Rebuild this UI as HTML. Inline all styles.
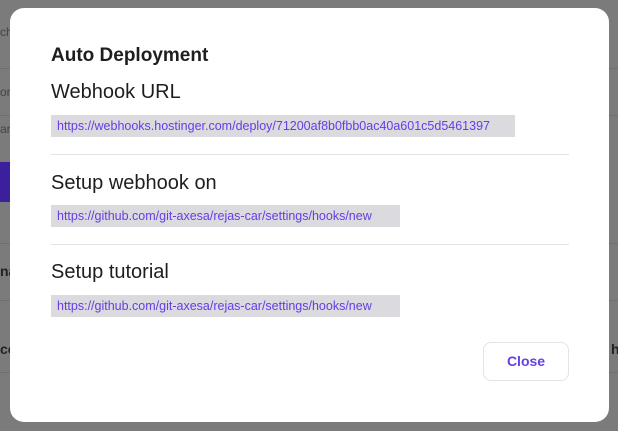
<!DOCTYPE html>
<html><head><style>
body{margin:0;width:618px;height:431px;background:#7b7b7c;position:relative;overflow:hidden;font-family:"Liberation Sans",sans-serif}
.ln{position:absolute;left:0;width:618px;height:1px;background:#6e6e70}
.m{position:absolute;left:10px;top:8px;width:599px;height:414px;background:#fff;border-radius:14px}
.a{position:absolute;left:41px;color:#1d1e20}
.u{position:absolute;left:41px;height:22px;background:#dadadf;color:#673de6;font-size:12.5px;line-height:22px;padding:0 6px;box-sizing:border-box}
.d{position:absolute;left:41px;width:518px;height:1px;background:#e3e3e7}
.b{position:absolute;left:473px;top:334px;width:86px;height:39px;border:1px solid #e3e3e7;border-radius:8px;box-sizing:border-box;color:#673de6;font-weight:bold;font-size:14px;text-align:center;line-height:37px}
</style></head><body>
<div class="ln" style="top:68px"></div><div class="ln" style="top:115px"></div>
<div class="ln" style="top:243px"></div><div class="ln" style="top:300px"></div><div class="ln" style="top:372px"></div>
<div style="position:absolute;left:0;top:162px;width:12px;height:40px;background:#3b1f9c"></div>
<div style="position:absolute;left:0;top:25px;font-size:12px;color:#444">ch</div>
<div style="position:absolute;left:0;top:85px;font-size:12px;color:#444">ory</div>
<div style="position:absolute;left:0;top:122px;font-size:12px;color:#444">ar</div>
<div style="position:absolute;left:0;top:263px;font-size:14px;font-weight:bold;color:#222">na</div>
<div style="position:absolute;left:0;top:341px;font-size:14px;font-weight:bold;color:#222">co</div>
<div style="position:absolute;left:611px;top:341px;font-size:14px;font-weight:bold;color:#222">h</div>
<div class="m">
<div class="a" style="top:37px;font-size:19px;font-weight:bold">Auto Deployment</div>
<div class="a" style="top:73px;font-size:20px">Webhook URL</div>
<div class="u" style="top:107px;width:464px">https://webhooks.hostinger.com/deploy/71200af8b0fbb0ac40a601c5d5461397</div>
<div class="d" style="top:146px"></div>
<div class="a" style="top:164px;font-size:20px">Setup webhook on</div>
<div class="u" style="top:197px;width:349px">https://github.com/git-axesa/rejas-car/settings/hooks/new</div>
<div class="d" style="top:236px"></div>
<div class="a" style="top:253px;font-size:20px">Setup tutorial</div>
<div class="u" style="top:287px;width:349px">https://github.com/git-axesa/rejas-car/settings/hooks/new</div>
<div class="b">Close</div>
</div>
</body></html>
